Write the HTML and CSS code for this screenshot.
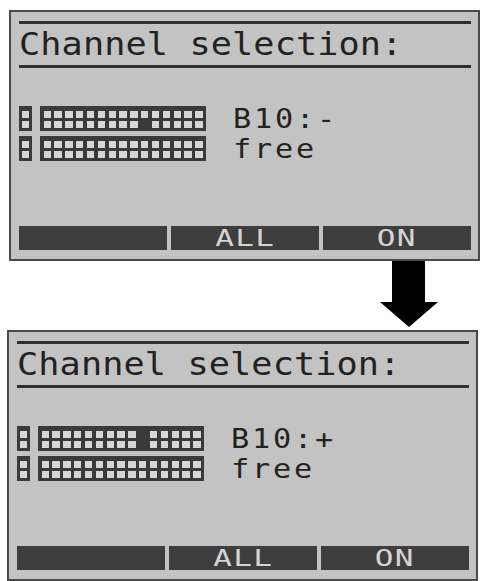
FILE: index.html
```html
<!DOCTYPE html>
<html>
<head>
<meta charset="utf-8">
<link rel="stylesheet" href="styles.css">
</head>
<body>
<div class="page">
  <section class="lcd lcd-a">
    <div class="rule"></div>
    <div class="title"><span>Channel selection:</span></div>
    <div class="rule"></div>
    <div class="rows">
      <div class="row">
        <div class="block small"><i></i><i></i></div>
        <div class="block wide">
          <i></i><i></i><i></i><i></i><i></i><i></i><i></i><i></i><i></i><i></i><i></i><i></i><i></i><i></i><i></i>
          <i></i><i></i><i></i><i></i><i></i><i></i><i></i><i></i><i></i><i class="off"></i><i></i><i></i><i></i><i></i><i></i>
        </div>
        <span class="info">B10:-</span>
      </div>
      <div class="row">
        <div class="block small"><i></i><i></i></div>
        <div class="block wide">
          <i></i><i></i><i></i><i></i><i></i><i></i><i></i><i></i><i></i><i></i><i></i><i></i><i></i><i></i><i></i>
          <i></i><i></i><i></i><i></i><i></i><i></i><i></i><i></i><i></i><i></i><i></i><i></i><i></i><i></i><i></i>
        </div>
        <span class="info">free</span>
      </div>
    </div>
    <div class="keys">
      <div class="key"></div>
      <div class="key"><span>ALL</span></div>
      <div class="key"><span>ON</span></div>
    </div>
  </section>

  <div class="arrow-row">
    <svg class="arrow" width="58" height="69" viewBox="0 0 58 69">
      <polygon points="12,0 45,0 45,41 58,41 29,66 0,41 12,41" fill="#000"/>
    </svg>
  </div>

  <section class="lcd lcd-b">
    <div class="rule"></div>
    <div class="title"><span>Channel selection:</span></div>
    <div class="rule"></div>
    <div class="rows">
      <div class="row">
        <div class="block small"><i></i><i></i></div>
        <div class="block wide">
          <i></i><i></i><i></i><i></i><i></i><i></i><i></i><i></i><i></i><i class="off"></i><i></i><i></i><i></i><i></i><i></i>
          <i></i><i></i><i></i><i></i><i></i><i></i><i></i><i></i><i></i><i class="off"></i><i></i><i></i><i></i><i></i><i></i>
        </div>
        <span class="info">B10:+</span>
      </div>
      <div class="row">
        <div class="block small"><i></i><i></i></div>
        <div class="block wide">
          <i></i><i></i><i></i><i></i><i></i><i></i><i></i><i></i><i></i><i></i><i></i><i></i><i></i><i></i><i></i>
          <i></i><i></i><i></i><i></i><i></i><i></i><i></i><i></i><i></i><i></i><i></i><i></i><i></i><i></i><i></i>
        </div>
        <span class="info">free</span>
      </div>
    </div>
    <div class="keys">
      <div class="key"></div>
      <div class="key"><span>ALL</span></div>
      <div class="key"><span>ON</span></div>
    </div>
  </section>
</div>
</body>
</html>
```

FILE: styles.css
```css
html, body {
  margin: 0;
  padding: 0;
  background: #ffffff;
}

.page {
  padding-top: 10px;
  width: 481px;
}

.lcd {
  box-sizing: border-box;
  width: 471px;
  background: #c3c3c3;
  border: 2px solid #4a4a4a;
  padding: 9px 7px 9px 8px;
  display: flex;
  flex-direction: column;
}

.lcd-a { margin-left: 9px; }
.lcd-b { margin-left: 7px; }

.rule {
  height: 3px;
  background: #2f2f2f;
}

.title {
  font-family: "DejaVu Sans Mono", monospace;
  font-size: 32px;
  line-height: 41px;
  height: 41px;
  color: #222222;
  white-space: nowrap;
  overflow: hidden;
}

.title span {
  display: inline-block;
  letter-spacing: 0.1px;
  transform: scaleX(1.1);
  transform-origin: left center;
}

.rows {
  margin-top: 38px;
  display: flex;
  flex-direction: column;
  gap: 5px;
}

.row {
  display: flex;
  align-items: flex-start;
  height: 25px;
}

.block {
  box-sizing: border-box;
  height: 25px;
  background: #3a3a3a;
  display: grid;
  row-gap: 3px;
  padding-top: 5px;
  padding-bottom: 3px;
  grid-auto-rows: 7px;
}

.block i {
  display: block;
  background: #d6d6d6;
}

.block i.off {
  background: transparent;
}

.small {
  width: 13px;
  padding-left: 3px;
  padding-right: 3px;
  grid-template-columns: 1fr;
}

.wide {
  margin-left: 8px;
  width: 166px;
  padding-left: 3.5px;
  padding-right: 3.5px;
  grid-template-columns: repeat(15, 1fr);
  column-gap: 3.5px;
}

.info {
  margin-left: 27px;
  font-family: "DejaVu Sans Mono", monospace;
  font-size: 27px;
  letter-spacing: 2.5px;
  line-height: 25px;
  color: #222222;
  white-space: nowrap;
  display: inline-block;
  transform: scaleX(1.12);
  transform-origin: left center;
}

.keys {
  margin-top: 65px;
  display: grid;
  grid-template-columns: 1fr 1fr 1fr;
  column-gap: 4px;
  height: 24px;
}

.key {
  background: #3e3e3e;
  display: flex;
  align-items: center;
  justify-content: center;
}

.key span {
  font-family: "DejaVu Sans Mono", monospace;
  font-size: 23px;
  line-height: 24px;
  letter-spacing: 1px;
  color: #d4d4d4;
  display: inline-block;
  transform: scaleX(1.35);
}

.arrow-row {
  height: 69px;
  display: flex;
  justify-content: flex-end;
  padding-right: 43px;
}

.arrow {
  display: block;
}
```
